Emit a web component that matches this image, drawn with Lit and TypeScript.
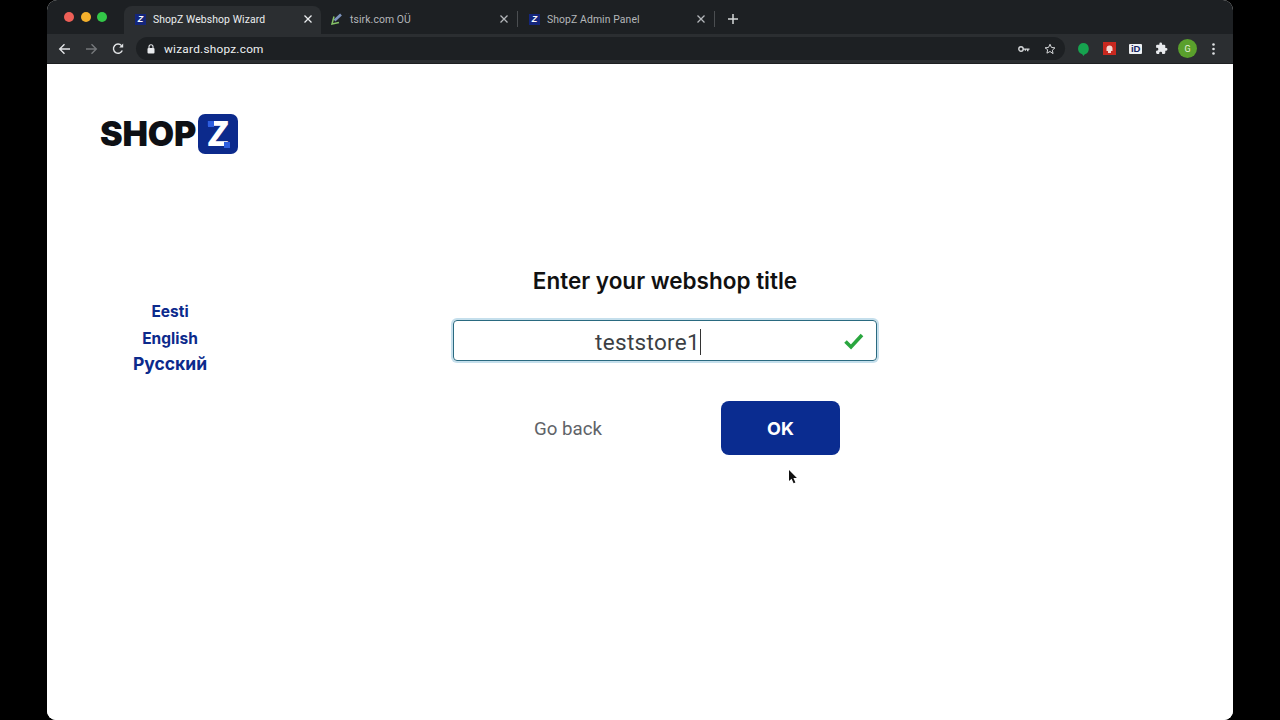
import { LitElement, html, css } from "lit";
import { customElement } from "lit/decorators.js";

const zFav = html`<span class="fav"><span>Z</span></span>`;
const closeX = html`<svg class="x" width="10" height="10" viewBox="0 0 10 10"><path d="M1.500 1.500l7 7M8.500 1.500l-7 7" stroke="currentColor" stroke-width="1.300" fill="none"/></svg>`;

@customElement("app-root")
export class AppRoot extends LitElement {
  static styles = css`
    :host { display: block; width: 1280px; height: 720px; background: #000; font-family: "Liberation Sans", Arial, sans-serif; overflow: hidden; position: relative; }
    .win { margin-left: 47px; width: 1186px; height: 720px; display: flex; flex-direction: column; border-radius: 10px 10px 9px 9px; overflow: hidden; background: #fff; }
    .strip { height: 34px; background: #1d2023; display: flex; align-items: flex-end; flex: none; }
    .lights { width: 77px; height: 34px; flex: none; display: flex; gap: 6.500px; padding: 12px 0 0 17px; box-sizing: border-box; }
    .lights i { width: 10px; height: 10px; border-radius: 50%; display: block; }
    .tab { height: 28px; width: 197px; flex: none; display: flex; align-items: center; box-sizing: border-box; padding: 0 8px 2px 11px; color: #b4b7ba; font: 400 10.400px "Roboto", sans-serif; position: relative; letter-spacing: .1px; }
    .tab.active { background: #2b2e31; color: #eceef0; border-radius: 8px 8px 0 0; }
    .tab.plain { width: 196px; }
    .tab.site { padding-left: 8px; }
    .tab .name { flex: 1; margin-left: 7px; white-space: nowrap; }
    .tab .x { flex: none; }
    .sep { width: 1px; height: 16px; background: #4b4e51; flex: none; margin-bottom: 7px; }
    .fav { width: 11px; height: 11px; background: #14267c; color: #fff; display: flex; align-items: center; justify-content: center; font: italic 700 9px "Liberation Sans", sans-serif; flex: none; }
    .plus { margin: 0 0 7px 12px; display: flex; height: 16px; align-items: center; }
    .bar { height: 30px; background: #2b2e31; display: flex; align-items: center; flex: none; box-sizing: border-box; padding-left: 11px; border-bottom: 1px solid #1d1f21; }
    .nav { display: flex; gap: 14px; flex: none; align-items: center; }
    .omni { margin-left: 12px; width: 929px; height: 23px; border-radius: 11.500px; background: #1d2023; display: flex; align-items: center; box-sizing: border-box; padding: 0 9px 0 11px; color: #eef0f2; font: 400 11.800px "Roboto", sans-serif; letter-spacing: .25px; flex: none; }
    .omni .url { flex: 1; margin-left: 9px; }
    .omni .r { display: flex; gap: 14px; align-items: center; }
    .exts { display: flex; align-items: center; margin-left: 11px; gap: 13px; }
    .id { width: 13px; height: 10px; margin-left: 0; background: #eef0f3; border-radius: 1px; color: #14235f; font: 700 9.500px/10px "Liberation Sans", sans-serif; text-align: center; letter-spacing: -.3px; }
    .avatar { width: 19px; height: 19px; margin-left: -3px; border-radius: 50%; background: #5aa02c; color: #e4efdc; font: 400 9px "Roboto", sans-serif; display: flex; align-items: center; justify-content: center; }
    .dots { margin-left: 2px; }
    .page { flex: 1; background: #fff; box-sizing: border-box; padding: 50px 0 0 53px; }
    .logo { display: flex; align-items: center; height: 40px; }
    .shop { width: 98px; flex: none; font: 900 34px "Inter", "Liberation Sans", sans-serif; color: #0e1015; letter-spacing: -.2px; line-height: 40px; white-space: nowrap; }
    .badge { width: 40px; height: 40px; border-radius: 7px; background: #0c2a8c; color: #fff; position: relative; display: flex; align-items: center; justify-content: center; font: 800 34px "Inter", sans-serif; line-height: 40px; }
    .badge i { position: absolute; width: 6px; height: 6px; background: #2f5fe0; }
    .badge .tl { left: 10px; top: 7px; }
    .badge .br { left: 26px; top: 28px; }
    .main { display: flex; margin-top: 112px; }
    .langs { width: 140px; flex: none; margin-top: 33px; display: flex; flex-direction: column; align-items: center; color: #0c2a8c; font: 700 15.500px/26.500px "Inter", sans-serif; }
    .langs .ru { font-size: 17.500px; margin-top: -1px; }
    .form { margin-left: 213px; width: 424px; flex: none; display: flex; flex-direction: column; }
    h1 { margin: 0; font: 600 22.500px/30px "Inter", sans-serif; color: #111; text-align: center; }
    .input { margin-top: 24px; height: 41px; box-sizing: border-box; border: 1px solid #2a6a80; border-radius: 4px; box-shadow: 0 0 0 2px #c5dfec; display: flex; align-items: center; justify-content: center; padding: 2px 34px 0 0; position: relative; color: #3c3f44; font: 400 22.500px "Roboto", sans-serif; letter-spacing: .3px; }
    .caret { width: 1px; height: 26px; background: #333; }
    .check { position: absolute; right: 11px; top: 9px; }
    .actions { margin-top: 40px; display: flex; align-items: center; }
    .back { margin-left: 81px; width: 187px; padding-top: 1px; color: #606368; font: 400 18.700px "Roboto", sans-serif; }
    .ok { width: 119px; height: 54px; border-radius: 8px; background: #0a2c90; color: #fff; font: 700 18px "Inter", sans-serif; border: none; padding: 0; }
    .cursor { position: absolute; left: 788px; top: 470px; }
    .l1 { background: #ed5f57; } .l2 { background: #f4b02c; } .l3 { background: #33c748; }
  `;

  render() {
    return html`
      <div class="win">
        <div class="strip">
          <div class="lights"><i class="l1"></i><i class="l2"></i><i class="l3"></i></div>
          <div class="tab active">${zFav}<span class="name">ShopZ Webshop Wizard</span>${closeX}</div>
          <div class="tab plain site">
            <svg width="14" height="14" viewBox="0 0 14 14"><path d="M5.500 8.500L12 2.500" stroke="#7d93bd" stroke-width="2.600" fill="none"/><path d="M5 4.500L3 12l7-1.500" stroke="#86c267" stroke-width="1.500" fill="none"/></svg>
            <span class="name">tsirk.com OÜ</span>${closeX}
          </div>
          <div class="sep"></div>
          <div class="tab plain">${zFav}<span class="name">ShopZ Admin Panel</span>${closeX}</div>
          <div class="sep"></div>
          <div class="plus"><svg width="12" height="12" viewBox="0 0 12 12"><path d="M6 1v10M1 6h10" stroke="#d5d7d9" stroke-width="1.500"/></svg></div>
        </div>
        <div class="bar">
          <div class="nav">
            <svg width="13" height="12" viewBox="0 0 13 12"><path d="M12 6H2M6.500 1.200L1.700 6l4.800 4.800" fill="none" stroke="#e2e4e6" stroke-width="1.400"/></svg>
            <svg width="13" height="12" viewBox="0 0 13 12"><path d="M1 6h10M6.500 1.200L11.300 6l-4.800 4.800" fill="none" stroke="#74777a" stroke-width="1.400"/></svg>
            <svg width="12" height="12" viewBox="0 0 12 12"><path d="M10.300 7.500A4.600 4.600 0 1 1 9.500 2.600" fill="none" stroke="#e2e4e6" stroke-width="1.400"/><path d="M11.200.6v4h-4z" fill="#e2e4e6"/></svg>
          </div>
          <div class="omni">
            <svg width="8" height="10" viewBox="0 0 8 10"><rect x="0.500" y="4" width="7" height="5.600" rx="1" fill="#e8eaed"/><path d="M2 4.500V2.800a2 2 0 0 1 4 0v1.700" fill="none" stroke="#e8eaed" stroke-width="1.100"/></svg>
            <span class="url">wizard.shopz.com</span>
            <span class="r">
              <svg width="12" height="8" viewBox="0 0 12 8"><circle cx="3" cy="4" r="2.200" fill="none" stroke="#d5d7d9" stroke-width="1.400"/><path d="M5 3.400h6.500v1.400h-1v1.400H9V4.800H8v1H6.800v-1H5z" fill="#d5d7d9"/></svg>
              <svg width="12" height="12" viewBox="0 0 24 24"><path d="M12 2.500l2.900 6.400 7 .8-5.200 4.700 1.400 6.900L12 17l-6.100 3.300 1.400-6.900L2.100 9.700l7-.8z" fill="none" stroke="#d5d7d9" stroke-width="2"/></svg>
            </span>
          </div>
          <div class="exts">
            <svg width="14" height="14" viewBox="0 0 14 14"><path d="M7 1a5.800 5.800 0 0 1 1.500 11.400L7.500 14l-1.300-1.700A5.800 5.800 0 0 1 7 1z" fill="#16a34f"/></svg>
            <svg width="13" height="13" viewBox="0 0 13 13"><rect width="13" height="13" fill="#c8281f"/><path d="M3.500 6.500a3 3 0 0 1 6 0v2.500h-6z" fill="#f3d7d2"/><rect x="5" y="9" width="3" height="2" fill="#f3d7d2"/></svg>
            <div class="id">iD</div>
            <svg width="13" height="13" viewBox="0 0 24 24"><path fill="#e8eaed" d="M20.500 11H19V7a2 2 0 0 0-2-2h-4V3.500a2.500 2.500 0 0 0-5 0V5H4a2 2 0 0 0-2 2v3.800h1.500a2.700 2.700 0 0 1 0 5.400H2V20a2 2 0 0 0 2 2h3.800v-1.500a2.700 2.700 0 0 1 5.400 0V22H17a2 2 0 0 0 2-2v-4h1.500a2.500 2.500 0 0 0 0-5z"/></svg>
            <div class="avatar">G</div>
            <svg class="dots" width="3" height="12" viewBox="0 0 3 12"><circle cx="1.500" cy="1.500" r="1.300" fill="#e0e2e4"/><circle cx="1.500" cy="6" r="1.300" fill="#e0e2e4"/><circle cx="1.500" cy="10.500" r="1.300" fill="#e0e2e4"/></svg>
          </div>
        </div>
        <div class="page">
          <div class="logo">
            <span class="shop">SHOP</span>
            <span class="badge">Z<i class="tl"></i><i class="br"></i></span>
          </div>
          <div class="main">
            <div class="langs"><span>Eesti</span><span>English</span><span class="ru">Русский</span></div>
            <div class="form">
              <h1>Enter your webshop title</h1>
              <div class="input">
                <span>teststore1</span><span class="caret"></span>
                <svg class="check" width="22" height="22" viewBox="0 0 22 22"><path d="M2.500 11.500l5.500 5.500L19 5" fill="none" stroke="#2aa63f" stroke-width="3.600"/></svg>
              </div>
              <div class="actions">
                <span class="back">Go back</span>
                <button class="ok">OK</button>
              </div>
            </div>
          </div>
        </div>
      </div>
      <svg class="cursor" width="11" height="15" viewBox="0 0 11 15"><path d="M1 0l0 11 2.600-2.300 2 4.600 1.800-.8-2-4.400 3.500-.1z" fill="#111"/></svg>
    `;
  }
}
